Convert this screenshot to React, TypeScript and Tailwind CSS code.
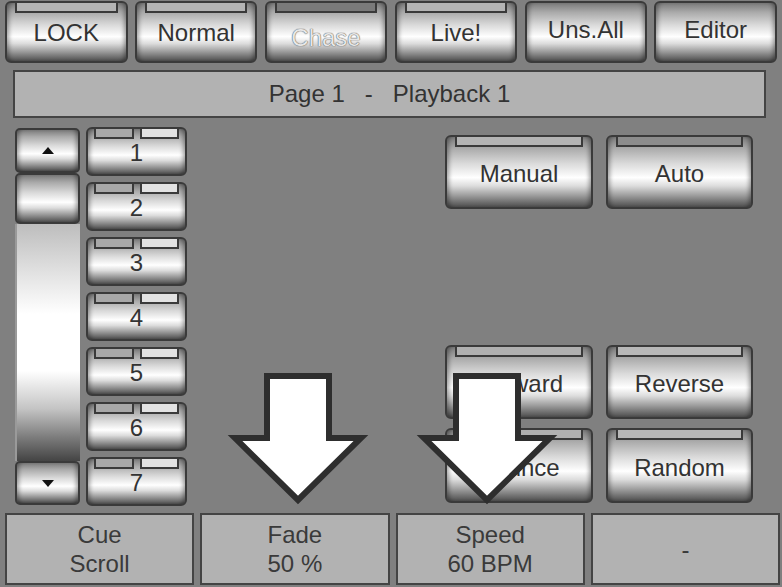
import React from "react";

const gloss =
  "bg-[linear-gradient(to_bottom,#7a7a7a_0%,#aaaaaa_16%,#dadada_38%,#ffffff_58%,#dcdcdc_70%,#969696_85%,#4e4e4e_100%)]";
const edge =
  "shadow-[inset_5px_0_4px_-3px_rgba(0,0,0,0.35),inset_-5px_0_4px_-3px_rgba(0,0,0,0.35)]";

function GlossButton({
  label,
  tab,
  className,
  labelClass,
}: {
  label: string;
  tab?: string;
  className: string;
  labelClass: string;
}) {
  return (
    <div
      className={`flex flex-col rounded-[6px] border-2 border-[#3a3a3a] ${gloss} ${edge} ${className}`}
    >
      {tab ? (
        <div className={`mx-[8px] h-[10px] shrink-0 border-x-2 border-b-2 border-[#3a3a3a] ${tab}`} />
      ) : null}
      <div className={`flex flex-1 items-center justify-center text-[24px] leading-none ${labelClass}`}>
        {label}
      </div>
    </div>
  );
}

function CueButton({ n }: { n: number }) {
  return (
    <div
      className={`flex h-[49px] w-[101px] flex-col rounded-[6px] border-2 border-[#3a3a3a] ${gloss} ${edge}`}
    >
      <div className="mx-[6px] flex h-[10px] shrink-0 gap-[6px]">
        <div className="flex-1 border-x-2 border-b-2 border-[#3a3a3a] bg-[#a8a8a8]" />
        <div className="flex-1 border-x-2 border-b-2 border-[#3a3a3a] bg-[#e2e2e2]" />
      </div>
      <div className="flex flex-1 items-center justify-center pb-[8px] text-[24px] leading-none text-[#333333]">
        {n}
      </div>
    </div>
  );
}

function Arrow({ x }: { x: number }) {
  // x = left edge of the shaft
  const pts = [
    [x + 3, 376],
    [x + 65, 376],
    [x + 65, 438],
    [x + 97, 438],
    [x + 34, 500],
    [x - 29, 438],
    [x + 3, 438],
  ]
    .map((p) => p.join(","))
    .join(" ");
  return <polygon points={pts} fill="#ffffff" stroke="#2e2e2e" strokeWidth={6} strokeLinejoin="miter" />;
}

export default function App() {
  const top = [
    { label: "LOCK", tab: "bg-[#b4b4b4]", labelClass: "pb-[9px] text-[#333333]" },
    { label: "Normal", tab: "bg-[#b4b4b4]", labelClass: "pb-[9px] text-[#333333]" },
    {
      label: "Chase",
      tab: "bg-[#7a7a7a]",
      labelClass: "pt-[1px] text-[#e6e6e6] [text-shadow:0_0_1px_#555555,0_0_1px_#555555]",
    },
    { label: "Live!", tab: "bg-[#b4b4b4]", labelClass: "pb-[9px] text-[#333333]" },
    { label: "Uns.All", tab: undefined, labelClass: "pb-[4px] text-[#333333]" },
    { label: "Editor", tab: undefined, labelClass: "pb-[4px] text-[#333333]" },
  ];

  const bottom = [
    ["Cue", "Scroll"],
    ["Fade", "50 %"],
    ["Speed", "60 BPM"],
    ["-"],
  ];

  return (
    <div className="relative h-[587px] w-[782px] overflow-hidden bg-[#808080] font-['Liberation_Sans',Arial,sans-serif]">
      {/* top mode buttons */}
      <div className="flex gap-[7.4px] px-[5px] pt-[1px]">
        {top.map((b) => (
          <GlossButton
            key={b.label}
            label={b.label}
            tab={b.tab}
            className="h-[62px] w-[123px]"
            labelClass={b.labelClass}
          />
        ))}
      </div>

      {/* page title */}
      <div className="mx-[13px] mt-[7px] flex h-[48px] w-[753px] items-center justify-center border-2 border-[#444444] bg-[#b2b2b2] text-[24px] whitespace-pre text-[#333333]">
        Page 1   -   Playback 1
      </div>

      {/* main area */}
      <div className="flex h-[395px]">
        {/* scroller */}
        <div className="ml-[15px] mt-[10px] flex h-[377px] w-[65px] flex-col">
          <div className={`flex h-[45px] items-center justify-center rounded-[5px] border-2 border-[#3a3a3a] ${gloss} ${edge}`}>
            <svg width="12" height="7" viewBox="0 0 12 7">
              <polygon points="6,0 12,7 0,7" fill="#111111" />
            </svg>
          </div>
          <div className={`h-[51px] rounded-[5px] border-2 border-[#3a3a3a] ${gloss} ${edge}`} />
          <div className="h-[237px] border-l-2 border-[#9a9a9a] bg-[linear-gradient(to_bottom,#bdbdbd_0%,#e4e4e4_22%,#ffffff_38%,#ffffff_62%,#c4c4c4_78%,#7c7c7c_90%,#444444_100%)]" />
          <div className={`flex h-[44px] items-center justify-center rounded-[5px] border-2 border-[#3a3a3a] ${gloss} ${edge}`}>
            <svg width="12" height="7" viewBox="0 0 12 7">
              <polygon points="0,0 12,0 6,7" fill="#111111" />
            </svg>
          </div>
        </div>

        {/* cue list */}
        <div className="ml-[6px] mt-[9px] flex flex-col gap-[6px]">
          {[1, 2, 3, 4, 5, 6, 7].map((n) => (
            <CueButton key={n} n={n} />
          ))}
        </div>

        {/* playback controls */}
        <div className="ml-[258px] mt-[17px] flex flex-col">
          <div className="grid grid-cols-[148px_147px] gap-x-[13px]">
            <GlossButton label="Manual" tab="bg-[#b4b4b4]" className="h-[74px]" labelClass="pb-[6px] text-[#333333]" />
            <GlossButton label="Auto" tab="bg-[#8c8c8c]" className="h-[74px]" labelClass="pb-[6px] text-[#333333]" />
          </div>
          <div className="mt-[136px] grid grid-cols-[148px_147px] gap-x-[13px] gap-y-[9px]">
            <GlossButton label="Forward" tab="bg-[#b0b0b0]" className="h-[74px]" labelClass="pb-[6px] text-[#333333]" />
            <GlossButton label="Reverse" tab="bg-[#b8b8b8]" className="h-[74px]" labelClass="pb-[6px] text-[#333333]" />
            <GlossButton label="Bounce" tab="bg-[#b0b0b0]" className="h-[75px]" labelClass="pb-[6px] text-[#333333]" />
            <GlossButton label="Random" tab="bg-[#b8b8b8]" className="h-[75px]" labelClass="pb-[6px] text-[#333333]" />
          </div>
        </div>
      </div>

      {/* bottom status cells */}
      <div className="flex h-[72px] gap-[6px] pl-[5px] pr-[2px]">
        {bottom.map((lines, i) => (
          <div
            key={i}
            className="flex flex-1 flex-col items-center justify-center border-2 border-[#444444] bg-[#b2b2b2] text-[24px] leading-[29px] text-[#3a3a3a]"
          >
            {lines.map((l) => (
              <span key={l}>{l}</span>
            ))}
          </div>
        ))}
      </div>

      {/* overlay arrows */}
      <svg className="pointer-events-none absolute inset-0" width="782" height="587">
        <Arrow x={264} />
        <Arrow x={453} />
      </svg>
    </div>
  );
}
